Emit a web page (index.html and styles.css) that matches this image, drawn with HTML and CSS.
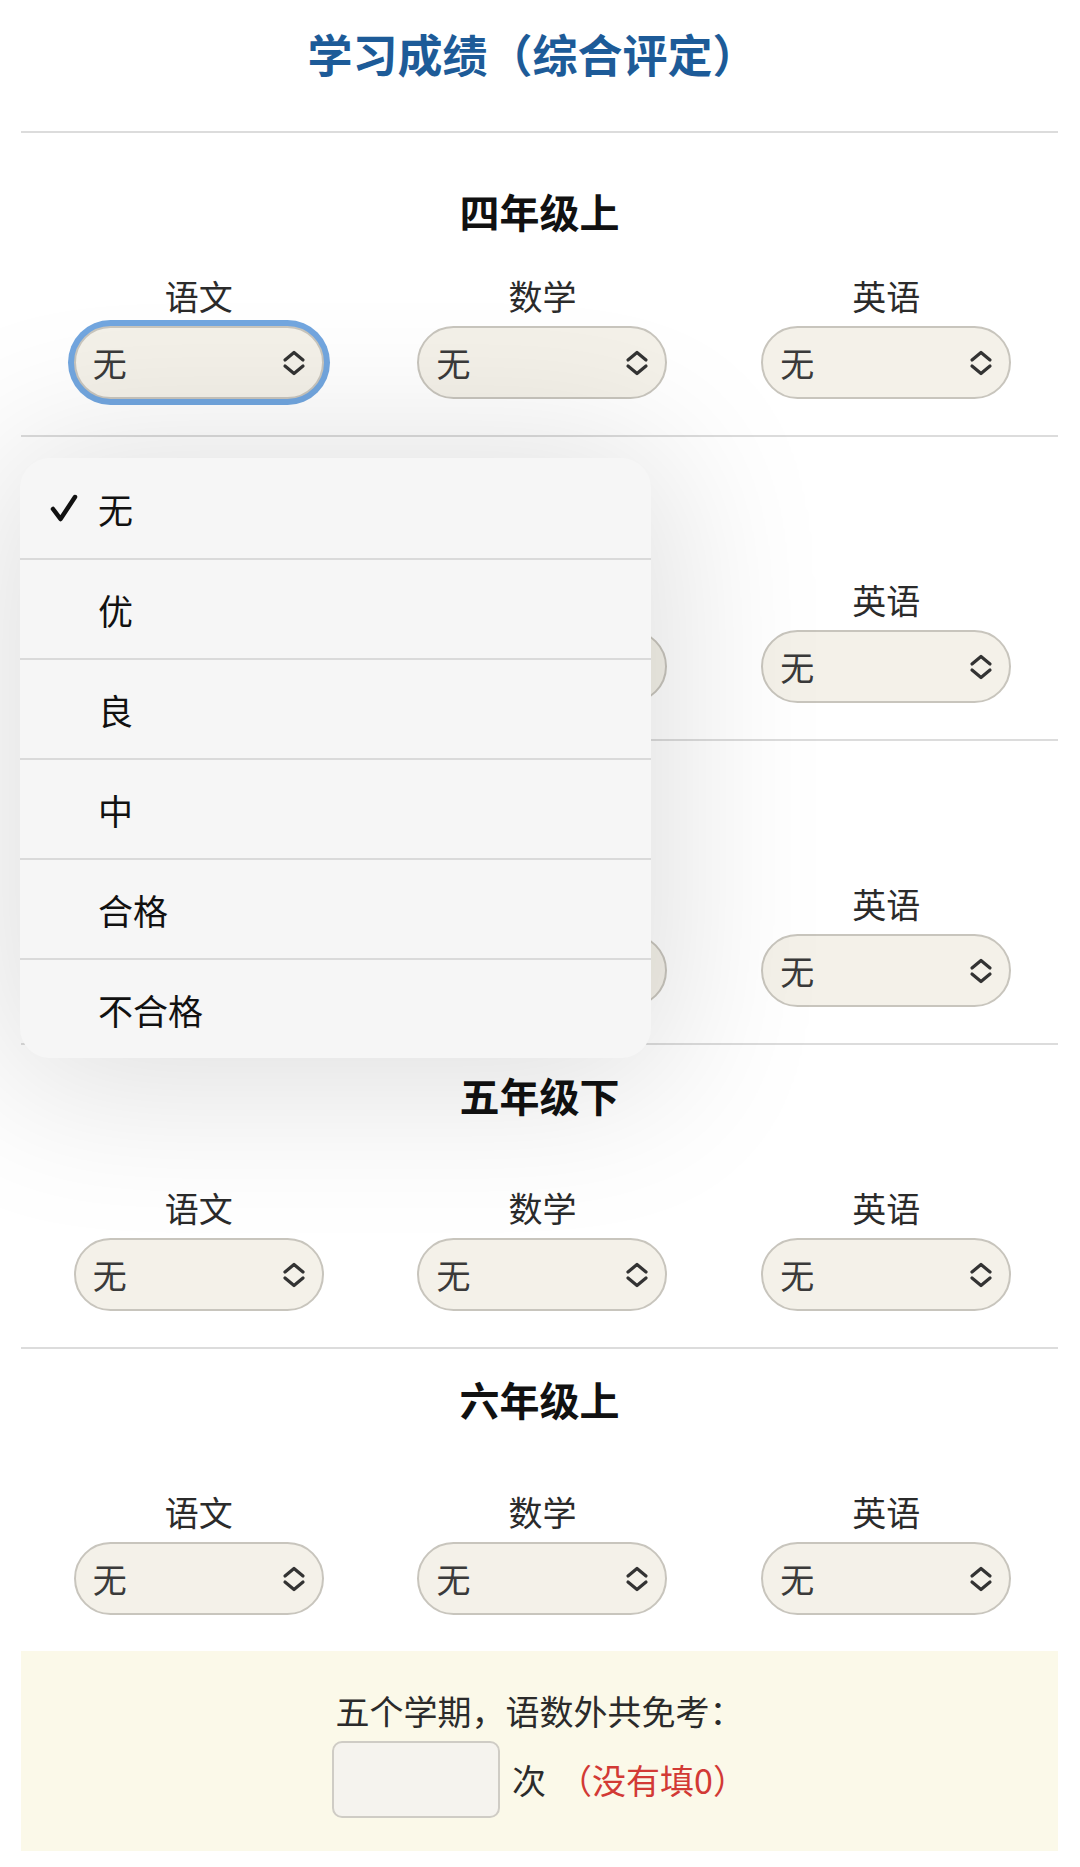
FILE: index.html
```html
<!DOCTYPE html>
<html lang="zh-CN">
<head>
  <meta charset="UTF-8">
  <meta name="viewport" content="width=device-width, initial-scale=1.0">
  <title>学习成绩</title>
  <link rel="stylesheet" href="styles.css">
</head>
<body>
  <main class="page">
    <h1 class="title">学习成绩（综合评定）</h1>

    <!-- 四年级上 -->
    <section class="term">
      <h2 class="term-name">四年级上</h2>
      <div class="subjects">
        <div class="subject">
          <div class="subject-name">语文</div>
          <div class="picker is-focused"><span>无</span><svg class="arrows" width="24" height="26" viewBox="0 0 24 26"><path d="M3 10 L12 2.5 L21 10 M3 16 L12 23.5 L21 16"/></svg></div>
        </div>
        <div class="subject">
          <div class="subject-name">数学</div>
          <div class="picker"><span>无</span><svg class="arrows" width="24" height="26" viewBox="0 0 24 26"><path d="M3 10 L12 2.5 L21 10 M3 16 L12 23.5 L21 16"/></svg></div>
        </div>
        <div class="subject">
          <div class="subject-name">英语</div>
          <div class="picker"><span>无</span><svg class="arrows" width="24" height="26" viewBox="0 0 24 26"><path d="M3 10 L12 2.5 L21 10 M3 16 L12 23.5 L21 16"/></svg></div>
        </div>
      </div>
    </section>

    <!-- 四年级下 -->
    <section class="term">
      <h2 class="term-name">四年级下</h2>
      <div class="subjects">
        <div class="subject">
          <div class="subject-name">语文</div>
          <div class="picker"><span>无</span><svg class="arrows" width="24" height="26" viewBox="0 0 24 26"><path d="M3 10 L12 2.5 L21 10 M3 16 L12 23.5 L21 16"/></svg></div>
        </div>
        <div class="subject">
          <div class="subject-name">数学</div>
          <div class="picker"><span>无</span><svg class="arrows" width="24" height="26" viewBox="0 0 24 26"><path d="M3 10 L12 2.5 L21 10 M3 16 L12 23.5 L21 16"/></svg></div>
        </div>
        <div class="subject">
          <div class="subject-name">英语</div>
          <div class="picker"><span>无</span><svg class="arrows" width="24" height="26" viewBox="0 0 24 26"><path d="M3 10 L12 2.5 L21 10 M3 16 L12 23.5 L21 16"/></svg></div>
        </div>
      </div>
    </section>

    <!-- 五年级上 -->
    <section class="term">
      <h2 class="term-name">五年级上</h2>
      <div class="subjects">
        <div class="subject">
          <div class="subject-name">语文</div>
          <div class="picker"><span>无</span><svg class="arrows" width="24" height="26" viewBox="0 0 24 26"><path d="M3 10 L12 2.5 L21 10 M3 16 L12 23.5 L21 16"/></svg></div>
        </div>
        <div class="subject">
          <div class="subject-name">数学</div>
          <div class="picker"><span>无</span><svg class="arrows" width="24" height="26" viewBox="0 0 24 26"><path d="M3 10 L12 2.5 L21 10 M3 16 L12 23.5 L21 16"/></svg></div>
        </div>
        <div class="subject">
          <div class="subject-name">英语</div>
          <div class="picker"><span>无</span><svg class="arrows" width="24" height="26" viewBox="0 0 24 26"><path d="M3 10 L12 2.5 L21 10 M3 16 L12 23.5 L21 16"/></svg></div>
        </div>
      </div>
    </section>

    <!-- 五年级下 -->
    <section class="term is-raised">
      <h2 class="term-name">五年级下</h2>
      <div class="subjects">
        <div class="subject">
          <div class="subject-name">语文</div>
          <div class="picker"><span>无</span><svg class="arrows" width="24" height="26" viewBox="0 0 24 26"><path d="M3 10 L12 2.5 L21 10 M3 16 L12 23.5 L21 16"/></svg></div>
        </div>
        <div class="subject">
          <div class="subject-name">数学</div>
          <div class="picker"><span>无</span><svg class="arrows" width="24" height="26" viewBox="0 0 24 26"><path d="M3 10 L12 2.5 L21 10 M3 16 L12 23.5 L21 16"/></svg></div>
        </div>
        <div class="subject">
          <div class="subject-name">英语</div>
          <div class="picker"><span>无</span><svg class="arrows" width="24" height="26" viewBox="0 0 24 26"><path d="M3 10 L12 2.5 L21 10 M3 16 L12 23.5 L21 16"/></svg></div>
        </div>
      </div>
    </section>

    <!-- 六年级上 -->
    <section class="term is-raised is-last">
      <h2 class="term-name">六年级上</h2>
      <div class="subjects">
        <div class="subject">
          <div class="subject-name">语文</div>
          <div class="picker"><span>无</span><svg class="arrows" width="24" height="26" viewBox="0 0 24 26"><path d="M3 10 L12 2.5 L21 10 M3 16 L12 23.5 L21 16"/></svg></div>
        </div>
        <div class="subject">
          <div class="subject-name">数学</div>
          <div class="picker"><span>无</span><svg class="arrows" width="24" height="26" viewBox="0 0 24 26"><path d="M3 10 L12 2.5 L21 10 M3 16 L12 23.5 L21 16"/></svg></div>
        </div>
        <div class="subject">
          <div class="subject-name">英语</div>
          <div class="picker"><span>无</span><svg class="arrows" width="24" height="26" viewBox="0 0 24 26"><path d="M3 10 L12 2.5 L21 10 M3 16 L12 23.5 L21 16"/></svg></div>
        </div>
      </div>
    </section>

    <!-- 免考次数 -->
    <div class="waiver">
      <div class="waiver-text">五个学期，语数外共免考：</div>
      <div class="waiver-row">
        <input type="text" class="waiver-input">
        <span class="waiver-unit">次</span>
        <span class="waiver-hint">（没有填0）</span>
      </div>
    </div>

    <!-- 下拉菜单 -->
    <ul class="menu">
      <li class="menu-item is-checked">
        <span class="menu-check"><svg width="28" height="30" viewBox="0 0 28 30"><path d="M3 16 L10.5 26 L25 4"/></svg></span>
        <span>无</span>
      </li>
      <li class="menu-item"><span class="menu-check"></span><span>优</span></li>
      <li class="menu-item"><span class="menu-check"></span><span>良</span></li>
      <li class="menu-item"><span class="menu-check"></span><span>中</span></li>
      <li class="menu-item"><span class="menu-check"></span><span>合格</span></li>
      <li class="menu-item"><span class="menu-check"></span><span>不合格</span></li>
    </ul>
  </main>
</body>
</html>
```

FILE: styles.css
```css
body {
  margin: 0;
  font-family: "Noto Sans CJK SC", "Noto Sans", sans-serif;
  background-color: #ffffff;
  color: #222222;
}
.page {
  position: relative;
  padding: 0 22px 17px 21px;
}
.title {
  margin: 0;
  padding: 24px 14px 47px 0;
  font-size: 45px;
  line-height: 60px;
  font-weight: bold;
  color: #1d5b98;
  text-align: center;
}
.term {
  border-top: 2px solid #dcdcdc;
  padding: 53px 0 36px;
}
.term.is-raised {
  padding-top: 25px;
}
.term-name {
  margin: 0 0 38px;
  font-size: 40px;
  line-height: 50px;
  font-weight: bold;
  color: #111111;
  text-align: center;
}
.term.is-raised .term-name {
  margin-bottom: 66px;
}
.subjects {
  display: grid;
  grid-template-columns: repeat(3, 1fr);
  padding-left: 6px;
}
.subject {
  display: flex;
  flex-direction: column;
  align-items: center;
}
.subject-name {
  font-size: 34px;
  line-height: 44px;
  color: #2b2b2b;
}
.picker {
  margin-top: 8px;
  width: 250px;
  height: 73px;
  box-sizing: border-box;
  border: 2px solid #c8c5bd;
  border-radius: 37px;
  background-color: #f4f1e9;
  display: flex;
  align-items: center;
  justify-content: space-between;
  padding: 0 16px 0 17px;
  font-size: 34px;
  color: #3a3a3a;
}
.picker.is-focused {
  box-shadow: 0 0 0 6px #72a6df;
}
.arrows path {
  fill: none;
  stroke: #333333;
  stroke-width: 3.2;
  stroke-linecap: round;
  stroke-linejoin: round;
}
.waiver {
  background-color: #fbf9e9;
  padding: 38px 0 33px;
  text-align: center;
  font-size: 34px;
  color: #2b2b2b;
}
.waiver-text {
  line-height: 44px;
}
.waiver-row {
  margin-top: 8px;
  display: flex;
  justify-content: center;
  align-items: center;
  line-height: 44px;
}
.waiver-input {
  width: 168px;
  height: 77px;
  box-sizing: border-box;
  border: 2px solid #cfccc5;
  border-radius: 10px;
  background-color: #f5f3ee;
  margin: 0;
}
.waiver-unit {
  margin-left: 12px;
}
.waiver-hint {
  margin-left: 12px;
  color: #d23a35;
}
.menu {
  position: absolute;
  top: 458px;
  left: 20px;
  width: 631px;
  margin: 0;
  padding: 0;
  list-style: none;
  background-color: #f6f6f6;
  border-radius: 30px;
  overflow: hidden;
  box-shadow: 0 10px 160px 20px rgba(0, 0, 0, 0.13);
}
.menu-item {
  height: 100px;
  box-sizing: border-box;
  display: flex;
  align-items: center;
  font-size: 35px;
  color: #111111;
}
.menu-item + .menu-item {
  border-top: 2px solid #dadada;
}
.menu-check {
  width: 78px;
  padding-left: 30px;
  box-sizing: border-box;
  display: flex;
  align-items: center;
}
.menu-check path {
  fill: none;
  stroke: #111111;
  stroke-width: 4.5;
  stroke-linecap: round;
  stroke-linejoin: round;
}
```
